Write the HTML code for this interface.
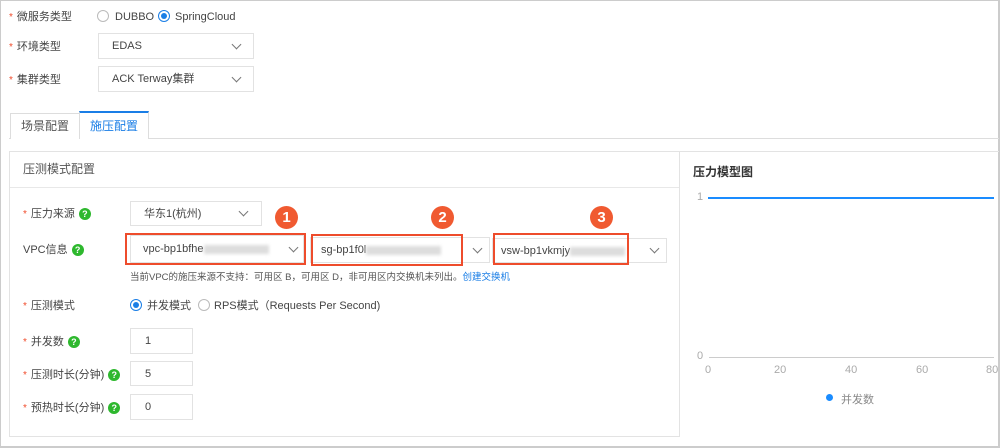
<!DOCTYPE html>
<html><head><meta charset="utf-8"><style>
*{box-sizing:border-box;margin:0;padding:0}
body{width:1000px;height:448px;background:#fff;font-family:"Liberation Sans","Noto Sans CJK SC",sans-serif;font-size:11px;color:#444;position:relative;overflow:hidden;border:1px solid #ccc;border-right:2px solid #ccc;border-bottom:2px solid #ccc}
.a{position:absolute}
.lab{position:absolute;font-size:11px;color:#444;line-height:14px;white-space:nowrap}
.lab b{color:#f04c2c;font-weight:normal;margin-right:4px;font-size:10px}
.sel{position:absolute;border:1px solid #e2e2e2;background:#fff;padding-left:12px;padding-top:1px;font-size:11px;color:#444;white-space:nowrap}
.chev{position:absolute;width:7px;height:7px;border-right:1.2px solid #777;border-bottom:1.2px solid #777;transform:rotate(45deg)}
.radio{position:absolute;width:12px;height:12px;border-radius:50%;border:1px solid #bbb;background:#fff}
.radio.on{border-color:#1a7ee6}
.radio.on:after{content:"";position:absolute;left:2px;top:2px;width:6px;height:6px;border-radius:50%;background:#1a7ee6}
.q{display:inline-block;width:12px;height:12px;border-radius:50%;background:#2eb82e;color:#fff;font-size:9px;font-weight:bold;text-align:center;line-height:12px;vertical-align:middle;margin-left:4px}
.red{position:absolute;border:2px solid #ee4c2c}
.badge{position:absolute;width:23px;height:23px;border-radius:50%;background:#f05a31;color:#fff;font-weight:bold;font-size:15px;text-align:center;line-height:23px}
.blur{display:inline-block;height:9px;background:#ddd;filter:blur(1.5px);vertical-align:middle}
.ax{position:absolute;color:#aaa;font-size:11px}
</style></head><body>
<div class="lab" style="left:8px;top:9px"><b>*</b>微服务类型</div>
<div class="radio" style="left:96px;top:9px"></div><div class="lab" style="left:114px;top:9px">DUBBO</div>
<div class="radio on" style="left:157px;top:9px"></div><div class="lab" style="left:174px;top:9px">SpringCloud</div>

<div class="lab" style="left:8px;top:39px"><b>*</b>环境类型</div>
<div class="sel" style="left:97px;top:32px;width:156px;height:26px;line-height:23px;padding-left:13px">EDAS<div class="chev" style="right:13px;top:7px"></div></div>
<div class="lab" style="left:8px;top:72px"><b>*</b>集群类型</div>
<div class="sel" style="left:97px;top:65px;width:156px;height:26px;line-height:23px;padding-left:13px">ACK Terway集群<div class="chev" style="right:13px;top:7px"></div></div>

<div class="a" style="left:8px;top:137px;width:990px;height:1px;background:#ddd"></div>
<div class="a" style="left:9px;top:112px;width:70px;height:26px;border:1px solid #ddd;border-bottom:none;background:#fff;text-align:center;line-height:25px;color:#555;font-size:12px">场景配置</div>
<div class="a" style="left:78px;top:110px;width:70px;height:28px;border:1px solid #ddd;border-top:2px solid #1a7ee6;border-bottom:none;background:#fff;text-align:center;line-height:26px;color:#1a7ee6;font-size:12px">施压配置</div>

<div class="a" style="left:8px;top:150px;width:671px;height:286px;border:1px solid #e3e3e3"></div>
<div class="a" style="left:9px;top:186px;width:669px;height:1px;background:#e8e8e8"></div>
<div class="lab" style="left:22px;top:161px;font-size:12px;color:#555">压测模式配置</div>
<div class="a" style="left:679px;top:150px;width:319px;height:286px;border-top:1px solid #e3e3e3"></div>
<div class="lab" style="left:692px;top:164px;font-weight:bold;font-size:12px;color:#333">压力模型图</div>

<div class="lab" style="left:22px;top:206px"><b>*</b>压力来源<span class="q">?</span></div>
<div class="sel" style="left:129px;top:200px;width:132px;height:25px;line-height:22px;padding-left:13px">华东1(杭州)<div class="chev" style="right:14px;top:6px"></div></div>

<div class="lab" style="left:22px;top:242px">VPC信息<span class="q">?</span></div>
<div class="sel" style="left:129px;top:234px;width:174px;height:28px;line-height:25px">vpc-bp1bfhe<span class="blur" style="width:65px"></span><div class="chev" style="right:6px;top:8px"></div></div>
<div class="sel" style="left:309px;top:236px;width:180px;height:26px;line-height:23px;padding-left:10px">sg-bp1f0l<span class="blur" style="width:75px"></span><div class="chev" style="right:8px;top:7px"></div></div>
<div class="sel" style="left:491px;top:237px;width:175px;height:25px;line-height:22px;padding-left:8px">vsw-bp1vkmjy<span class="blur" style="width:55px"></span><div class="chev" style="right:8px;top:6px"></div></div>
<div class="red" style="left:124px;top:232px;width:181px;height:32px"></div>
<div class="red" style="left:310px;top:233px;width:152px;height:32px"></div>
<div class="red" style="left:492px;top:232px;width:136px;height:32px"></div>
<div class="badge" style="left:274px;top:205px">1</div>
<div class="badge" style="left:430px;top:205px">2</div>
<div class="badge" style="left:589px;top:205px">3</div>
<div class="lab" style="left:129px;top:270px;font-size:9.5px;color:#555">当前VPC的施压来源不支持：可用区 B，可用区 D，非可用区内交换机未列出。<span style="color:#1a7ee6">创建交换机</span></div>

<div class="lab" style="left:22px;top:298px"><b>*</b>压测模式</div>
<div class="radio on" style="left:129px;top:298px"></div><div class="lab" style="left:146px;top:298px">并发模式</div>
<div class="radio" style="left:197px;top:298px"></div><div class="lab" style="left:213px;top:298px">RPS模式（Requests Per Second)</div>

<div class="lab" style="left:22px;top:334px"><b>*</b>并发数<span class="q">?</span></div>
<div class="sel" style="left:129px;top:327px;width:63px;height:26px;line-height:23px;padding-left:14px">1</div>
<div class="lab" style="left:22px;top:367px"><b>*</b>压测时长(分钟)<span class="q">?</span></div>
<div class="sel" style="left:129px;top:360px;width:63px;height:25px;line-height:22px;padding-left:14px">5</div>
<div class="lab" style="left:22px;top:400px"><b>*</b>预热时长(分钟)<span class="q">?</span></div>
<div class="sel" style="left:129px;top:393px;width:63px;height:26px;line-height:23px;padding-left:14px">0</div>

<div class="ax" style="left:696px;top:190px">1</div>
<div class="a" style="left:707px;top:196px;width:286px;height:2px;background:#1a8cff"></div>
<div class="ax" style="left:696px;top:349px">0</div>
<div class="a" style="left:708px;top:356px;width:285px;height:1px;background:#ccc"></div>
<div class="ax" style="left:704px;top:363px">0</div>
<div class="ax" style="left:773px;top:363px">20</div>
<div class="ax" style="left:844px;top:363px">40</div>
<div class="ax" style="left:915px;top:363px">60</div>
<div class="ax" style="left:985px;top:363px">80</div>
<div class="a" style="left:825px;top:393px;width:7px;height:7px;border-radius:50%;background:#1a8cff"></div>
<div class="ax" style="left:840px;top:390px;color:#888">并发数</div>
</body></html>
